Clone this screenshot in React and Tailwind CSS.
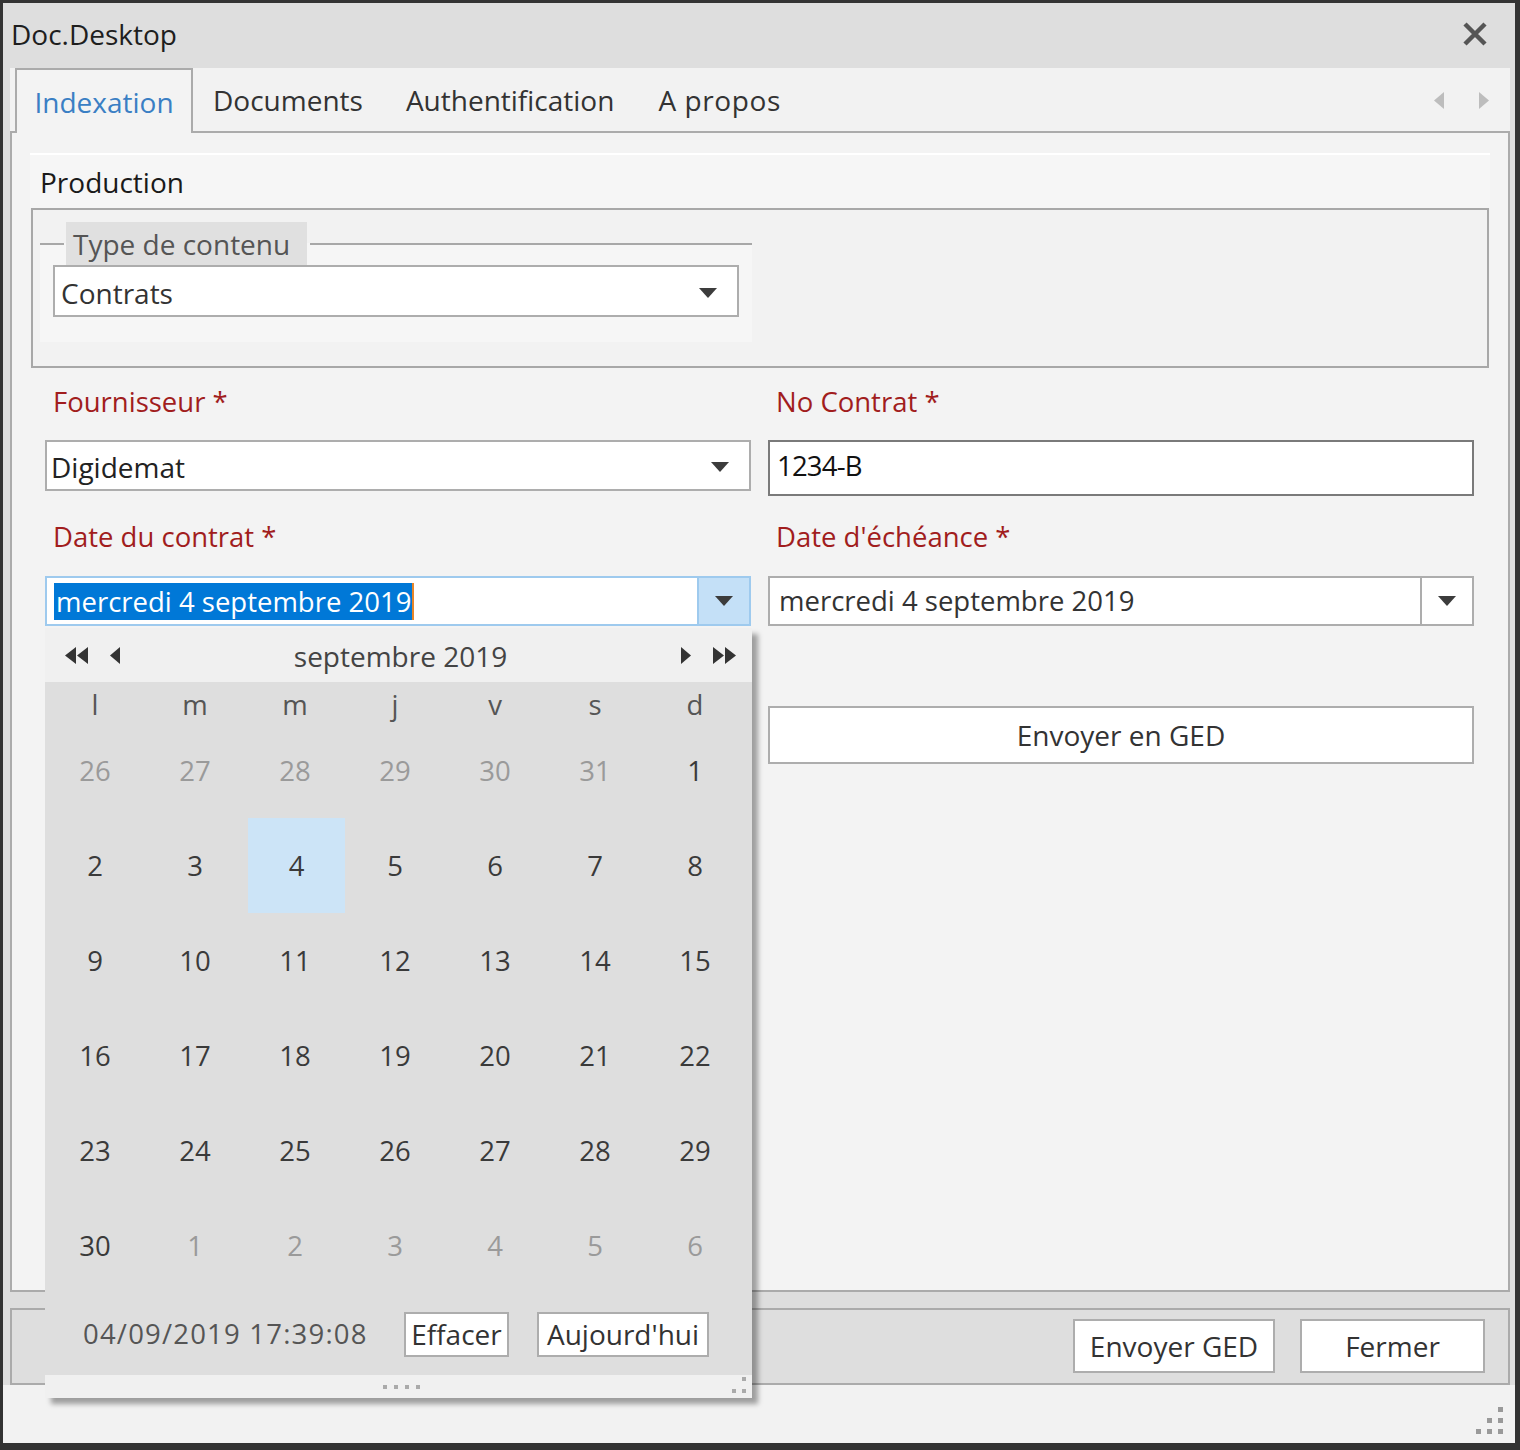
import React from "react";

function Down() {
  return (
    <svg width="18" height="10" viewBox="0 0 18 10">
      <path d="M0 0H18L9 10Z" fill="#3c3c3c" />
    </svg>
  );
}

function Left({ color = "#333" }) {
  return (
    <svg width="10" height="17" viewBox="0 0 10 17">
      <path d="M10 0V17L0 8.5Z" fill={color} />
    </svg>
  );
}
function Right({ color = "#333" }) {
  return (
    <svg width="10" height="17" viewBox="0 0 10 17">
      <path d="M0 0V17L10 8.5Z" fill={color} />
    </svg>
  );
}
function DLeft() {
  return (
    <svg width="23" height="17" viewBox="0 0 23 17">
      <path d="M11 0V17L0 8.5Z M23 0V17L12 8.5Z" fill="#333" />
    </svg>
  );
}
function DRight() {
  return (
    <svg width="23" height="17" viewBox="0 0 23 17">
      <path d="M0 0V17L11 8.5Z M12 0V17L23 8.5Z" fill="#333" />
    </svg>
  );
}

const rows = [
  [26, 27, 28, 29, 30, 31, 1],
  [2, 3, 4, 5, 6, 7, 8],
  [9, 10, 11, 12, 13, 14, 15],
  [16, 17, 18, 19, 20, 21, 22],
  [23, 24, 25, 26, 27, 28, 29],
  [30, 1, 2, 3, 4, 5, 6],
];

function Calendar() {
  return (
    <div className="absolute left-0 top-[52px] w-[707px] z-20 flex flex-col shadow-[6px_6px_5px_rgba(0,0,0,0.35)]">
      <div className="h-[54px] bg-[#f0f0f0] flex items-center">
        <div className="flex items-center pl-[20px] gap-[22px]">
          <DLeft />
          <Left />
        </div>
        <div className="flex-1 text-center text-[#444] text-[28px] pt-[2px]">septembre 2019</div>
        <div className="flex items-center pr-[16px] gap-[22px]">
          <Right />
          <DRight />
        </div>
      </div>
      <div className="bg-[#dedede]">
        <div className="grid grid-cols-[repeat(7,100px)] h-[41px] text-[#555]">
          {["l", "m", "m", "j", "v", "s", "d"].map((d, i) => (
            <div key={i} className="flex items-center justify-center pt-[2px]">
              {d}
            </div>
          ))}
        </div>
        {rows.map((r, ri) => (
          <div key={ri} className="grid grid-cols-[repeat(7,100px)] h-[95px]">
            {r.map((d, di) => {
              const other = (ri === 0 && d > 7) || (ri === 5 && d < 7);
              const sel = ri === 1 && d === 4;
              return (
                <div
                  key={di}
                  className={
                    "flex items-center justify-center " +
                    (other ? "text-[#9a9a9a] " : "text-[#3a3a3a] ") +
                    (sel ? "bg-[#cce4f7] ml-[3px]" : "")
                  }
                >
                  {d}
                </div>
              );
            })}
          </div>
        ))}
        <div className="h-[82px] flex items-center pl-[38px]">
          <span className="w-[321px] text-[#555] tracking-[1.2px]">04/09/2019 17:39:08</span>
          <div className="w-[105px] h-[45px] bg-white border-2 border-[#adadad] flex items-center justify-center text-[#333] text-[28px]">
            Effacer
          </div>
          <div className="w-[172px] h-[45px] ml-[28px] bg-white border-2 border-[#adadad] flex items-center justify-center text-[#333] text-[28px]">
            Aujourd'hui
          </div>
        </div>
      </div>
      <div className="h-[23px] bg-[#f0f0f0] flex items-center">
        <div className="flex-1 flex justify-center gap-[7px] pl-[26px]">
          <span className="w-[4px] h-[4px] bg-[#aaa]" />
          <span className="w-[4px] h-[4px] bg-[#aaa]" />
          <span className="w-[4px] h-[4px] bg-[#aaa]" />
          <span className="w-[4px] h-[4px] bg-[#aaa]" />
        </div>
        <div className="w-[20px] h-[18px] pr-[6px] grid grid-cols-2 grid-rows-2 gap-[5px] self-end mb-[3px]">
          <span />
          <span className="w-[4px] h-[4px] bg-[#aaa]" />
          <span className="w-[4px] h-[4px] bg-[#aaa]" />
          <span className="w-[4px] h-[4px] bg-[#aaa]" />
        </div>
      </div>
    </div>
  );
}

function Label({ children, className = "" }) {
  return <div className={"text-[#a11d1d] leading-[36px] pl-[8px] " + className}>{children}</div>;
}

export default function App() {
  return (
    <div className="w-[1520px] h-[1450px] bg-[#333] pt-[3px] pl-[3px] pr-[5px] pb-[7px] font-['Open_Sans','Noto_Sans',sans-serif] text-[27.5px] text-[#333] overflow-hidden">
      <div className="h-full bg-[#dedede] flex flex-col">
        {/* title bar */}
        <div className="h-[65px] shrink-0 flex items-center justify-between pl-[8px] pr-[27px] pb-[3px]">
          <span className="text-[#1e1e1e] text-[28px]">Doc.Desktop</span>
          <svg width="26" height="26" viewBox="0 0 26 26">
            <path d="M3 3L23 23M23 3L3 23" stroke="#555" strokeWidth="4.5" />
          </svg>
        </div>

        {/* tab control */}
        <div className="ml-[7px] mr-[5px] h-[1224px] shrink-0 flex flex-col">
          <div className="h-[65px] shrink-0 flex bg-[#f2f2f2]">
            <div className="w-[5px] border-b-2 border-[#ababab]" />
            <div className="w-[178px] border-2 border-b-0 border-[#ababab] bg-[#f3f3f3] flex items-center justify-center pt-[1px] text-[#3a7fc4] text-[28px]">
              Indexation
            </div>
            <div className="flex-1 border-b-2 border-[#ababab] flex items-center pt-[1px] text-[28px]">
              <div className="pl-[20px] pr-[21px]">Documents</div>
              <div className="pl-[22px] pr-[24px]">Authentification</div>
              <div className="px-[20px] tracking-[0.6px]">A propos</div>
              <div className="flex-1" />
              <div className="flex items-center gap-[35px] pr-[21px]">
                <Left color="#bdbdbd" />
                <Right color="#bdbdbd" />
              </div>
            </div>
          </div>

          <div className="flex-1 bg-[#f3f3f3] border-2 border-t-0 border-[#ababab] flex flex-col">
            {/* Production header */}
            <div className="mt-[20px] mx-[18px] h-[55px] bg-[#f6f6f6] border-t-2 border-white flex items-center pl-[10px] text-[#1a1a1a] text-[28px]">
              Production
            </div>
            {/* Group box */}
            <div className="mx-[19px] h-[160px] border-2 border-[#a8a8a8] bg-[#f2f2f2] pt-[12px] pl-[7px]">
              <div className="w-[712px] h-[120px] flex flex-col bg-[linear-gradient(to_bottom,transparent_21px,#f6f6f6_21px)]">
                <div className="h-[43px] flex">
                  <div className="w-[24px] flex items-center">
                    <div className="h-[2px] w-full bg-[#a8a8a8]" />
                  </div>
                  <div className="ml-[2px] w-[241px] bg-[#e0e0e0] flex items-center pl-[7px] text-[#555] text-[28px]">
                    Type de contenu
                  </div>
                  <div className="flex-1 flex items-center pl-[3px]">
                    <div className="h-[2px] w-full bg-[#a8a8a8]" />
                  </div>
                </div>
                <div className="ml-[13px] w-[686px] h-[52px] bg-white border-2 border-[#adadad] flex items-center justify-between pl-[6px] pr-[20px] pt-[4px] text-[#333] text-[28px]">
                  <span>Contrats</span>
                  <Down />
                </div>
              </div>
            </div>

            {/* fields */}
            <div className="pl-[33px] pr-[34px] grid grid-cols-[706px_706px] gap-x-[17px]">
              <Label className="h-[72px] pt-[16px]">Fournisseur *</Label>
              <Label className="h-[72px] pt-[16px]">No Contrat *</Label>

              <div className="h-[56px]">
                <div className="h-[51px] bg-white border-2 border-[#adadad] flex items-center justify-between pl-[4px] pr-[20px] pt-[2px] text-[#222] text-[28px]">
                  <span>Digidemat</span>
                  <Down />
                </div>
              </div>
              <div className="h-[56px] bg-white border-2 border-[#7a7a7a] flex items-start pt-[3px] pl-[7px] text-[#111] tracking-[-0.8px]">
                1234-B
              </div>

              <Label className="h-[80px] pt-[23px]">Date du contrat *</Label>
              <Label className="h-[80px] pt-[23px]">Date d'échéance *</Label>

              <div className="relative h-[50px]">
                <div className="h-[50px] bg-white border-2 border-[#9ecaee] flex items-stretch">
                  <div className="flex-1 flex items-center pl-[7px]">
                    <span className="bg-[#0078d7] text-white leading-[37px] pl-[2px] pr-[1px]">
                      mercredi 4 septembre 2019
                    </span>
                    <span className="w-[2px] h-[37px] bg-[#e8862a]" />
                  </div>
                  <div className="w-[52px] bg-[#c4e0f7] border-l-2 border-[#9ecaee] flex items-center justify-center">
                    <Down />
                  </div>
                </div>
                <Calendar />
              </div>
              <div className="h-[50px] bg-white border-2 border-[#adadad] flex items-stretch">
                <div className="flex-1 flex items-center pl-[9px] text-[#333]">mercredi 4 septembre 2019</div>
                <div className="w-[52px] border-l-2 border-[#adadad] flex items-center justify-center">
                  <Down />
                </div>
              </div>

              <div />
              <div className="mt-[80px] h-[58px] bg-white border-2 border-[#adadad] flex items-center justify-center text-[#333] text-[28px]">
                Envoyer en GED
              </div>
            </div>
          </div>
        </div>

        <div className="h-[16px] shrink-0" />

        {/* bottom panel */}
        <div className="ml-[7px] mr-[5px] h-[77px] shrink-0 border-2 border-[#ababab] bg-[#dedede] flex justify-end items-start pt-[9px] pr-[23px] gap-[25px]">
          <div className="w-[202px] h-[54px] bg-white border-2 border-[#adadad] flex items-center justify-center text-[#333] text-[28px]">
            Envoyer GED
          </div>
          <div className="w-[185px] h-[54px] bg-white border-2 border-[#adadad] flex items-center justify-center text-[#333] text-[28px]">
            Fermer
          </div>
        </div>

        {/* status strip */}
        <div className="flex-1 bg-[#f2f2f2] flex justify-end items-end pr-[12px] pb-[9px]">
          <div className="grid grid-cols-3 grid-rows-3 gap-[6px]">
            <span />
            <span />
            <span className="w-[5px] h-[5px] bg-[#9a9a9a]" />
            <span />
            <span className="w-[5px] h-[5px] bg-[#9a9a9a]" />
            <span className="w-[5px] h-[5px] bg-[#9a9a9a]" />
            <span className="w-[5px] h-[5px] bg-[#9a9a9a]" />
            <span className="w-[5px] h-[5px] bg-[#9a9a9a]" />
            <span className="w-[5px] h-[5px] bg-[#9a9a9a]" />
          </div>
        </div>
      </div>
    </div>
  );
}
